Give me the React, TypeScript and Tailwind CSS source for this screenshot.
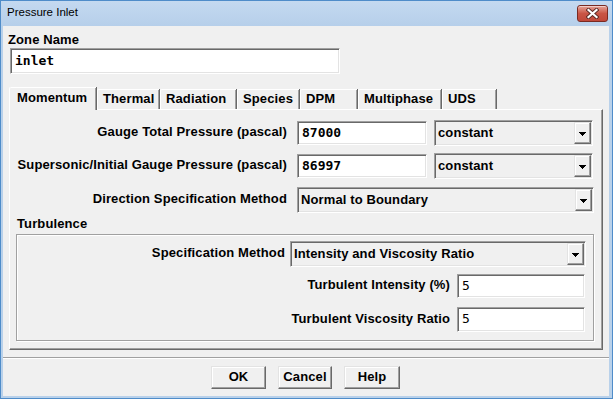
import React from "react";

const sans = "font-['Liberation_Sans',Arial,sans-serif]";
const mono = "font-['DejaVu_Sans_Mono',monospace]";
const sunken =
  "border border-t-[#a0a0a0] border-l-[#a0a0a0] border-r-white border-b-white shadow-[inset_1px_1px_0_#696969,inset_-1px_-1px_0_#e3e3e3]";
const raised =
  "border border-t-[#e3e3e3] border-l-[#e3e3e3] border-r-[#696969] border-b-[#696969] shadow-[inset_-1px_-1px_0_#a0a0a0,inset_1px_1px_0_#ffffff]";
const label = `${sans} font-bold text-[13px] tracking-[0.12px] text-black whitespace-nowrap`;

function Combo({ className, text }: { className: string; text: string }) {
  return (
    <div className={`${sunken} bg-[#f0f0f0] flex p-[1px] ${className}`}>
      <div className={`flex-1 flex items-center pl-[2px] pb-[1px] ${label}`}>{text}</div>
      <div className={`${raised} w-[17px] bg-[#f0f0f0] flex items-center justify-center`}>
        <svg width="7" height="4" viewBox="0 0 7 4" className="mt-[2px]" shapeRendering="crispEdges">
          <path d="M0 0h7L3.5 4z" fill="#000" />
        </svg>
      </div>
    </div>
  );
}

function Field({ className, text, bold }: { className: string; text: string; bold?: boolean }) {
  return (
    <div
      className={`${sunken} bg-white flex items-center pl-[4px] pb-[1px] ${mono} text-[13px] ${
        bold ? "font-bold" : ""
      } text-black ${className}`}
    >
      {text}
    </div>
  );
}

const tabs: { name: string; w: string }[] = [
  { name: "Thermal", w: "w-[62px]" },
  { name: "Radiation", w: "w-[76px]" },
  { name: "Species", w: "w-[62px]" },
  { name: "DPM", w: "w-[57px]" },
  { name: "Multiphase", w: "w-[83px]" },
  { name: "UDS", w: "w-[54px]" },
];

function Button({ text, className }: { text: string; className: string }) {
  return (
    <div className={`${raised} bg-[#f0f0f0] h-[23px] flex items-center justify-center pb-[1px] ${label} ${className}`}>
      {text}
    </div>
  );
}

export default function App() {
  return (
    <div className="w-[613px] h-[399px] flex flex-col bg-[#b9d1ea] border border-[#4f8cc9]">
      {/* Title bar */}
      <div className="h-[25px] flex justify-between bg-gradient-to-b from-[#c4d9f0] to-[#b6cfea]">
        <div className={`pl-[6px] flex items-center ${sans} text-[11.5px] text-black pb-[1px]`}>Pressure Inlet</div>
        <div className="mt-[4px] mr-[4px] w-[31px] h-[17px] rounded-[3px] border border-[#7a2a22] bg-gradient-to-b from-[#e4a297] via-[#c95545] to-[#c0483a] flex items-center justify-center shadow-[inset_0_1px_0_rgba(255,255,255,0.5)]">
          <svg width="13" height="11" viewBox="0 0 13 11">
            <path d="M2.5 2 L10.5 9 M10.5 2 L2.5 9" stroke="#5a2a25" strokeWidth="4" strokeLinecap="square" />
            <path d="M2.5 2 L10.5 9 M10.5 2 L2.5 9" stroke="#ffffff" strokeWidth="2.2" strokeLinecap="square" />
          </svg>
        </div>
      </div>

      {/* Content */}
      <div className="ml-[2px] mr-[3px] mb-[2px] h-[370px] bg-[#f0f0f0] flex flex-col">
        <div className="pl-[5px] pt-[5px] h-[21px] leading-[15px]">
          <span className={label}>Zone Name</span>
        </div>
        <div className="pl-[7px] mt-[1px]">
          <Field className="w-[330px] h-[26px] pl-[3px]" text="inlet" bold />
        </div>

        <div className="px-[6px] mt-[13px] flex flex-col">
          {/* Tab strip */}
          <div className="h-[22px] flex items-end">
            <div
              className={`relative z-10 w-[87px] h-[23px] -mb-[1px] bg-[#f0f0f0] border-t border-l border-white rounded-tl-[2px] shadow-[inset_-1px_0_0_#a0a0a0,1px_0_0_#696969] pl-[7px] flex items-center pb-[3px] ${label}`}
            >
              Momentum
            </div>
            {tabs.map((t) => (
              <div
                key={t.name}
                className={`${t.w} h-[20px] ml-[1px] border-t border-l border-white rounded-tl-[2px] shadow-[inset_-1px_0_0_#a0a0a0,1px_0_0_#696969] pl-[5px] flex items-center pb-[1px] ${label}`}
              >
                {t.name}
              </div>
            ))}
          </div>

          {/* Tab panel */}
          <div className="h-[241px] border border-t-white border-l-white border-r-[#696969] border-b-[#696969] shadow-[inset_-1px_-1px_0_#a0a0a0] flex flex-col">
            <div className="mt-[10px] flex items-center h-[26px]">
              <div className={`w-[277px] text-right pb-[2px] ${label}`}>Gauge Total Pressure (pascal)</div>
              <Field className="ml-[10px] w-[130px] h-[24px]" text="87000" bold />
              <Combo className="ml-[7px] w-[159px] h-[26px]" text="constant" />
            </div>
            <div className="mt-[7px] flex items-center h-[26px]">
              <div className={`w-[277px] text-right pb-[2px] ${label}`}>Supersonic/Initial Gauge Pressure (pascal)</div>
              <Field className="ml-[10px] w-[130px] h-[24px]" text="86997" bold />
              <Combo className="ml-[7px] w-[159px] h-[26px]" text="constant" />
            </div>
            <div className="mt-[8px] flex items-center h-[26px]">
              <div className={`w-[277px] text-right pb-[2px] ${label}`}>Direction Specification Method</div>
              <Combo className="ml-[10px] w-[297px] h-[26px]" text="Normal to Boundary" />
            </div>

            <div className="mt-[3px] h-[16px] pl-[7px] flex items-center">
              <span className={label}>Turbulence</span>
            </div>
            <div className="mt-[2px] ml-[6px] w-[578px] h-[107px] border border-[#a0a0a0] shadow-[1px_1px_0_#ffffff,inset_1px_1px_0_#ffffff] flex flex-col">
              <div className="mt-[6px] flex items-center h-[26px]">
                <div className={`w-[268px] text-right pb-[2px] ${label}`}>Specification Method</div>
                <Combo className="ml-[5px] w-[296px] h-[26px]" text="Intensity and Viscosity Ratio" />
              </div>
              <div className="mt-[7px] flex items-center h-[24px]">
                <div className={`w-[433px] text-right pb-[2px] ${label}`}>Turbulent Intensity (%)</div>
                <Field className="ml-[7px] w-[128px] h-[24px]" text="5" />
              </div>
              <div className="mt-[9px] flex items-center h-[25px]">
                <div className={`w-[433px] text-right pb-[2px] ${label}`}>Turbulent Viscosity Ratio</div>
                <Field className="ml-[7px] w-[128px] h-[25px]" text="5" />
              </div>
            </div>
          </div>
        </div>

        {/* separator */}
        <div className="mt-[7px] h-[2px] border-t border-[#a0a0a0] border-b border-b-white" />

        {/* Buttons */}
        <div className="mt-[7px] flex justify-center gap-[12px] pr-[1px]">
          <Button text="OK" className="w-[55px]" />
          <Button text="Cancel" className="w-[54px]" />
          <Button text="Help" className="w-[56px]" />
        </div>
      </div>
    </div>
  );
}
